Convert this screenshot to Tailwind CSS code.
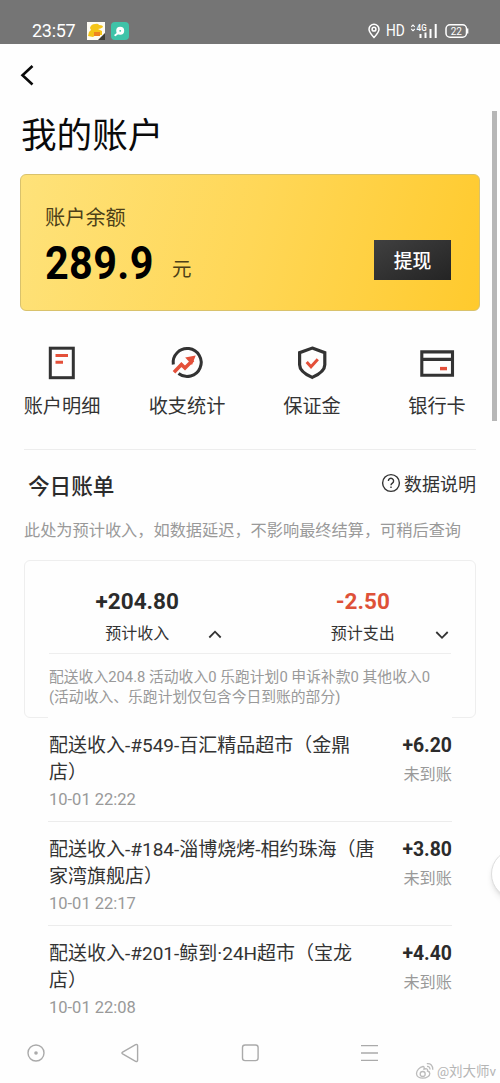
<!DOCTYPE html>
<html lang="zh-CN">
<head>
<meta charset="utf-8">
<meta name="viewport" content="width=device-width, initial-scale=1">
<title>我的账户</title>
<script src="https://cdn.jsdelivr.net/npm/@tailwindcss/browser@4"></script>
</head>
<body class="bg-white">
<div class="relative flex h-[1083px] w-[500px] flex-col overflow-hidden bg-[#fefefe] font-['Roboto','Noto_Sans_CJK_SC',sans-serif] text-[#333] whitespace-nowrap">

  <!-- Status bar -->
  <header class="flex h-11 shrink-0 items-end justify-between bg-[#757575] pb-[3px] pl-8 pr-[31px] text-white">
    <div class="flex items-center">
      <span class="w-[54px] text-[18px] leading-5 tracking-[-0.3px]">23:57</span>
      <svg class="ml-[1px] h-[18px] w-[18px]" viewBox="0 0 18 18">
        <rect width="18" height="18" fill="#fdfbf3"/>
        <path d="M3 6q1-4 5-4 3-1 4 1 4 0 4 2-2 2-5 2l4 2v4H9l-3 2-5-1 1-4 2-2z" fill="#f5c518"/>
        <rect x="7" y="10" width="6" height="4" fill="#ee8420"/>
        <path d="M18 11v7h-7z" fill="#3c3c35"/>
      </svg>
      <svg class="ml-[6px] h-[18px] w-[18px]" viewBox="0 0 18 18">
        <rect width="18" height="18" rx="4" fill="#3fc3a8"/>
        <circle cx="9.2" cy="8.8" r="4" fill="#fff"/>
        <path d="M6.6 11.5l-2.4 1.8" stroke="#fff" stroke-width="1.8" stroke-linecap="round"/>
        <circle cx="9.2" cy="8.8" r="0.9" fill="#3fc3a8"/>
      </svg>
    </div>
    <div class="flex h-5 items-center">
      <svg class="h-[16px] w-[12px]" viewBox="0 0 12 16" fill="none" stroke="#fff" stroke-width="1.5">
        <path d="M6 14.5C3 11.2 1 9 1 6.2a5 5 0 0 1 10 0C11 9 9 11.2 6 14.5z"/><circle cx="6" cy="6.2" r="1.9"/>
      </svg>
      <span class="ml-[6px] w-[25px] origin-left scale-x-[0.86] text-[16px] leading-5">HD</span>
      <svg class="h-[16px] w-[27px]" viewBox="0 0 27 16" fill="#fff">
        <path d="M0.3 3.8L2 2l1.7 1.8M0.3 6l1.7 1.8L3.7 6" fill="none" stroke="#fff" stroke-width="1.1"/>
        <text x="5.6" y="7.6" font-size="8.6" font-weight="500" textLength="10" lengthAdjust="spacingAndGlyphs">4G</text>
        <rect x="8.5" y="11" width="2" height="4"/><rect x="13.5" y="9.5" width="2" height="5.5"/><rect x="18.5" y="6" width="2" height="9"/><rect x="23.7" y="1" width="2" height="14"/>
      </svg>
      <svg class="ml-[7px] h-[16px] w-[24px]" viewBox="0 0 24 16">
        <rect x="1" y="1.8" width="20.5" height="12.4" rx="4" fill="none" stroke="#fff" stroke-width="1.5"/>
        <path d="M22.7 5.5v5" stroke="#fff" stroke-width="1.3"/>
        <text x="11.3" y="11.6" text-anchor="middle" font-size="10" fill="#fff">22</text>
      </svg>
    </div>
  </header>

  <!-- Title -->
  <div class="flex h-[62px] shrink-0 items-center pl-5">
    <svg class="h-[22px] w-[14px]" viewBox="0 0 14 22" fill="none" stroke="#0a0a0a" stroke-width="2.6"><path d="M12.5 2L2.5 11.3l10 9.2"/></svg>
  </div>
  <h1 class="h-[68px] shrink-0 pl-[21px] text-[35.6px] leading-[61px] text-[#0a0a0a]">我的账户</h1>

  <!-- Balance card -->
  <section class="mx-5 flex h-[137px] shrink-0 rounded-md border border-[#d9c26c] bg-linear-[105deg] from-[#fee27a] via-[#ffd757] to-[#ffca2d] pl-6 pr-7">
    <div class="flex-1">
      <p class="mt-[27px] text-[20.2px] leading-8 text-[#4c3f18]">账户余额</p>
      <div class="flex h-[58px] text-black">
        <span class="w-[127px] origin-left scale-x-[0.91] text-[45.5px] font-bold leading-[60px] tracking-[0.4px]">289.9</span>
        <span class="pt-[6px] text-[19.5px] leading-[60px] text-[#4c3f18]">元</span>
      </div>
    </div>
    <button class="mt-[65px] flex h-10 w-[77px] items-center justify-center bg-linear-to-br from-[#404040] to-[#242424] pt-[4px] text-[18.8px] font-medium text-white">提现</button>
  </section>

  <!-- Shortcuts -->
  <nav class="flex h-[138px] shrink-0 pt-[33px] text-[19.2px] text-[#333]">
    <a class="flex w-[124px] flex-col items-center gap-[10px]">
      <svg class="h-[36px] w-[36px]" viewBox="0 0 36 36" fill="none"><rect x="6.3" y="4.2" width="23" height="29.5" stroke="#333" stroke-width="3"/><path d="M11.5 11.5h12.5M11.5 18.2h7.5" stroke="#e4503a" stroke-width="3"/></svg>
      <span class="leading-[34px]">账户明细</span>
    </a>
    <a class="flex w-[126px] flex-col items-center gap-[10px]">
      <svg class="h-[36px] w-[36px]" viewBox="-0.7 -0.5 36 36" fill="none"><path d="M3.6 20A14 14 0 1 1 8.8 29" stroke="#333" stroke-width="3"/><path d="M4.3 27.8l7.4-7.8 3.6 3.5 8-8" stroke="#e4503a" stroke-width="3.6"/><path d="M15.5 13l10.5-2-3.7 9.4z" fill="#e4503a"/></svg>
      <span class="leading-[34px]">收支统计</span>
    </a>
    <a class="flex w-[124px] flex-col items-center gap-[10px]">
      <svg class="h-[36px] w-[36px]" viewBox="0 0 36 36" fill="none"><path d="M18.2 4.1l12.6 4.6v12c0 5.8-5.6 9.6-12.6 12.7-7-3.1-12.6-6.9-12.6-12.7v-12z" stroke="#333" stroke-width="3.2"/><path d="M12.7 18l4.3 4.7 6.8-7.5" stroke="#e4503a" stroke-width="3"/></svg>
      <span class="leading-[34px]">保证金</span>
    </a>
    <a class="flex w-[126px] flex-col items-center gap-[10px]">
      <svg class="h-[36px] w-[36px]" viewBox="0 0 36 36" fill="none"><path d="M2.8 7.9h30.7v23.3H2.8zM2.8 15.4h30.7" stroke="#333" stroke-width="3.1"/><path d="M21 24.6h7" stroke="#e4503a" stroke-width="3.4"/></svg>
      <span class="leading-[34px]">银行卡</span>
    </a>
  </nav>

  <!-- Today's bill -->
  <section class="mx-6 shrink-0 border-t border-[#ededed]">
    <div class="flex h-[60px] items-center justify-between pl-1 pt-3">
      <h2 class="pt-[2px] text-[21.6px] font-medium leading-8 text-[#2b2b2b]">今日账单</h2>
      <div class="flex items-center gap-[3px] pb-[4px] text-[18px]">
        <svg class="-mt-[2px] h-5 w-5" viewBox="0 0 20 20" fill="none" stroke="#333" stroke-width="1.4"><circle cx="10" cy="10" r="8.4"/><path d="M7.4 8a2.6 2.6 0 1 1 4 2.1c-1 .7-1.4 1.1-1.4 2.2M10 13.5v1.5"/></svg>
        <span>数据说明</span>
      </div>
    </div>
    <p class="h-[50px] pt-px text-[16.2px] leading-[40px] text-[#999]">此处为预计收入，如数据延迟，不影响最终结算，可稍后查询</p>

    <div class="relative h-[158px] rounded-md border border-[#eee] px-6">
      <div class="flex h-[93px] border-b border-[#eee] pt-[24px]">
        <div class="relative w-[177px] text-center">
          <p class="text-[22.5px] font-bold leading-8 text-[#2b2b2b]">+204.80</p>
          <p class="pt-px text-[16px] leading-8">预计收入</p>
          <svg class="absolute left-[158px] top-[43px] h-3 w-4" viewBox="0 0 16 12" fill="none" stroke="#333" stroke-width="1.8"><path d="M2.3 9.5L8 3.7l5.7 5.8"/></svg>
        </div>
        <div class="relative ml-[49px] w-[177px] text-center">
          <p class="text-[22.5px] font-bold leading-8 text-[#de5138]">-2.50</p>
          <p class="pt-px text-[16px] leading-8">预计支出</p>
          <svg class="absolute left-[159px] top-[44px] h-3 w-4" viewBox="0 0 16 12" fill="none" stroke="#333" stroke-width="1.8"><path d="M2.3 3L8 8.8 13.7 3"/></svg>
        </div>
      </div>
      <p class="pt-[13px] text-[14.8px] leading-5 text-[#999]">配送收入204.8 活动收入0 乐跑计划0 申诉补款0 其他收入0<br>(活动收入、乐跑计划仅包含今日到账的部分)</p>
    </div>
  </section>

  <!-- Entries; the list covers the middle of the card's lower edge -->
  <ul class="relative z-10 mx-[48px] -mt-px shrink-0 bg-[#fefefe]">
    <li class="flex h-[105px] justify-between border-b border-[#ececec] pt-[15px]">
      <div class="pl-px"><p class="text-[19px] leading-[27px]">配送收入-#549-百汇精品超市（金鼎<br>店）</p><p class="text-[16.5px] leading-[27px] text-[#999]">10-01 22:22</p></div>
      <div class="text-right"><p class="text-[19.4px] font-bold leading-[27px] text-[#2b2b2b]">+6.20</p><p class="text-[16.2px] leading-[31px] text-[#999]">未到账</p></div>
    </li>
    <li class="flex h-[104px] justify-between border-b border-[#ececec] pt-[14px]">
      <div class="pl-px"><p class="text-[19px] leading-[27px]">配送收入-#184-淄博烧烤-相约珠海（唐<br>家湾旗舰店）</p><p class="text-[16.5px] leading-[27px] text-[#999]">10-01 22:17</p></div>
      <div class="text-right"><p class="text-[19.4px] font-bold leading-[27px] text-[#2b2b2b]">+3.80</p><p class="text-[16.2px] leading-[31px] text-[#999]">未到账</p></div>
    </li>
    <li class="flex h-[103px] justify-between pt-[14px]">
      <div class="pl-px"><p class="text-[19px] leading-[27px]">配送收入-#201-鲸到·24H超市（宝龙<br>店）</p><p class="text-[16.5px] leading-[27px] text-[#999]">10-01 22:08</p></div>
      <div class="text-right"><p class="text-[19.4px] font-bold leading-[27px] text-[#2b2b2b]">+4.40</p><p class="text-[16.2px] leading-[31px] text-[#999]">未到账</p></div>
    </li>
  </ul>

  <!-- System navigation -->
  <footer class="flex min-h-0 flex-1 items-start pl-[26px] pt-[14px]">
    <svg class="h-5 w-5" viewBox="0 0 20 20" fill="none" stroke="#aaa" stroke-width="1.4"><circle cx="10" cy="10" r="8"/><circle cx="10" cy="10" r="1.8" fill="#aaa" stroke="none"/></svg>
    <svg class="ml-[74px] h-5 w-5" viewBox="0 0 20 20" fill="none" stroke="#aaa" stroke-width="1.4"><path d="M2.6 9.1L15.6 1.7q2-.8 2 1v14.6q0 1.8-2 1L2.6 10.9q-1.4-.9 0-1.8z"/></svg>
    <svg class="ml-[100px] h-5 w-5" viewBox="0 0 20 20" fill="none" stroke="#aaa" stroke-width="1.4"><rect x="2.5" y="2" width="15.6" height="15.6" rx="2.6"/></svg>
    <svg class="ml-[99px] h-5 w-5" viewBox="0 0 20 20" fill="none" stroke="#aaa" stroke-width="1.4"><path d="M2 2.6h17M2 10h17M2 17.4h17"/></svg>
  </footer>

  <!-- Overlays: scrollbar, floating button, watermark -->
  <div class="absolute left-[492px] top-[111px] h-[310px] w-[5px] bg-[#b7b7b7]"></div>
  <div class="absolute left-[491px] top-[849px] h-[50px] w-[50px] rounded-full border border-[#dedede] bg-white shadow-md"></div>
  <div class="absolute left-[415px] top-[1061px] flex items-center gap-[3px] text-[13.5px] leading-5 text-[#b5b5b5]">
    <svg class="h-[18px] w-[19px]" viewBox="0 0 19 18" fill="none" stroke="#bbb" stroke-width="1.3"><path d="M8 4.5C4.5 5 1.5 8.5 1.5 11.5c0 3 3 4.7 6.3 4.7 4 0 7-2.2 7-4.7 0-1.5-1-2.2-2.3-2.5.5-2-.8-2.8-3.5-1.8.3-1.8.2-2.7-1-2.7z"/><circle cx="7.7" cy="12" r="2.5"/><path d="M12 4.5q3-.3 3 3M11.8 1.7q6-.5 6 6"/></svg>
    <span>@刘大师v</span>
  </div>
</div>
</body>
</html>
